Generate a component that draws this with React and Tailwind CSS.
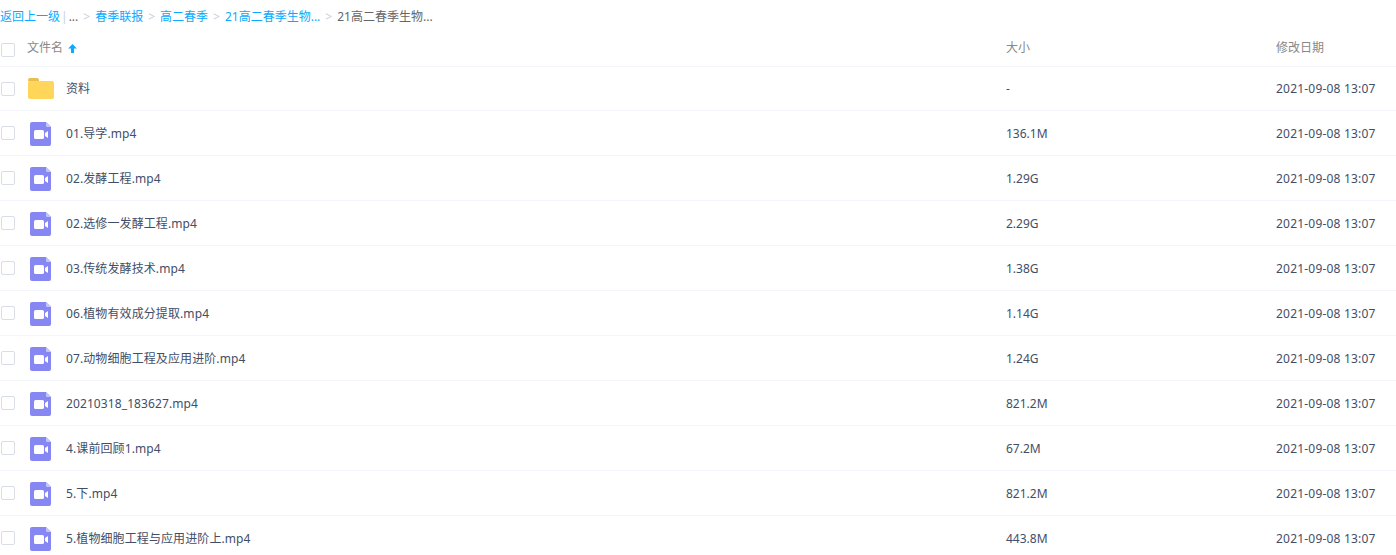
const files = [
  { name: '01.导学.mp4', size: '136.1M' },
  { name: '02.发酵工程.mp4', size: '1.29G' },
  { name: '02.选修一发酵工程.mp4', size: '2.29G' },
  { name: '03.传统发酵技术.mp4', size: '1.38G' },
  { name: '06.植物有效成分提取.mp4', size: '1.14G' },
  { name: '07.动物细胞工程及应用进阶.mp4', size: '1.24G' },
  { name: '20210318_183627.mp4', size: '821.2M' },
  { name: '4.课前回顾1.mp4', size: '67.2M' },
  { name: '5.下.mp4', size: '821.2M' },
  { name: '5.植物细胞工程与应用进阶上.mp4', size: '443.8M' },
];

const font = { fontFamily: '"Noto Sans", "Noto Sans CJK SC", sans-serif' };

function Check() {
  return <span className="ml-[1px] block h-[14px] w-[14px] shrink-0 rounded-[2px] border border-[#d8dde6] bg-white"></span>;
}

function FolderIcon() {
  return (
    <svg width="26" height="21" viewBox="0 0 26 21" className="block">
      <path d="M0 2a2 2 0 0 1 2-2h7a2 2 0 0 1 2 2v1H0z" fill="#e9bd52" />
      <rect x="0" y="3" width="26" height="18" rx="2" fill="#ffd659" />
    </svg>
  );
}

function VideoIcon() {
  return (
    <svg width="21" height="24" viewBox="0 0 21 24" className="mt-[2px] block">
      <path d="M2 0h14l5 5v17a2 2 0 0 1-2 2H2a2 2 0 0 1-2-2V2a2 2 0 0 1 2-2z" fill="#8687f2" />
      <path d="M16 0l5 5h-4a1 1 0 0 1-1-1z" fill="#c3c4f9" />
      <rect x="4" y="8" width="10" height="9" rx="1.6" fill="#fff" />
      <path d="M15 11l3-2v7l-3-2z" fill="#fff" />
    </svg>
  );
}

function UpArrow() {
  return (
    <svg width="9" height="9" viewBox="0 0 9 9" className="ml-[5px] block">
      <path d="M4.5 0L8.8 4.6H6V9H3V4.6H0.2z" fill="#09aaff" />
    </svg>
  );
}

function Sep() {
  return <span className="mx-[5px] text-[#c5d0e0]">&gt;</span>;
}

function Row({ icon, name, size, first }) {
  return (
    <div className={`flex items-center border-b border-[#f3f5fa] text-[12px] text-[#424e67] ${first ? 'h-[44px]' : 'h-[45px]'}`}>
      <Check />
      <span className="flex w-[51px] shrink-0 justify-center">{icon}</span>
      <span className={`w-[940px] shrink-0 tracking-[0.1px] ${first ? '' : 'pt-[2px]'}`}>{name}</span>
      <span className={`w-[270px] shrink-0 ${first ? '' : 'pt-[2px]'}`}>{size}</span>
      <span className={`tracking-[0.2px] ${first ? '' : 'pt-[2px]'}`}>2021-09-08 13:07</span>
    </div>
  );
}

export default function App() {
  return (
    <div className="h-[555px] w-[1396px] overflow-hidden bg-white" style={font}>
      <div className="flex h-[33px] items-center whitespace-nowrap text-[12px] text-[#09aaff]">
        <span>返回上一级</span>
        <span className="mx-[1px] text-[#c5d0e0]">|</span>
        <span className="text-[#666]">...</span>
        <Sep />
        <span>春季联报</span>
        <Sep />
        <span>高二春季</span>
        <Sep />
        <span>21高二春季生物...</span>
        <Sep />
        <span className="text-[#666]">21高二春季生物...</span>
      </div>
      <div className="flex h-[34px] items-center border-b border-[#f3f5fa] text-[12px] text-[#888]">
        <Check />
        <span className="ml-[12px] flex w-[979px] shrink-0 items-center pb-[3px]">
          文件名
          <UpArrow />
        </span>
        <span className="w-[270px] shrink-0 pb-[3px]">大小</span>
        <span className="pb-[3px]">修改日期</span>
      </div>
      <Row first icon={<FolderIcon />} name="资料" size="-" />
      {files.map((f) => (
        <Row key={f.name} icon={<VideoIcon />} name={f.name} size={f.size} />
      ))}
    </div>
  );
}
